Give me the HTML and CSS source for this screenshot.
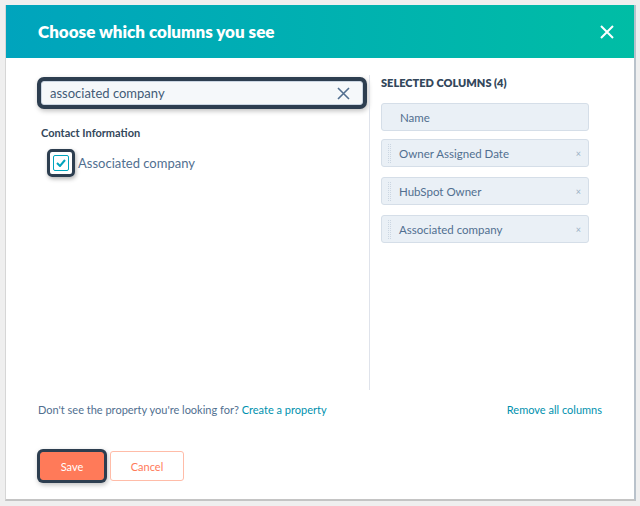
FILE: index.html
```html
<!DOCTYPE html>
<html lang="en">
<head>
  <meta charset="UTF-8">
  <title>Choose which columns you see</title>
  <link rel="stylesheet" href="styles.css">
</head>
<body>
  <div class="modal">
    <div class="modal-header">
      <h1>Choose which columns you see</h1>
      <button class="close" aria-label="Close">
        <svg width="14" height="14" viewBox="0 0 14 14"><path d="M1 1L13 13M13 1L1 13" stroke="#fff" stroke-width="2" fill="none"/></svg>
      </button>
    </div>

    <div class="modal-body">
      <div class="left-panel">
        <div class="search focus-ring">
          <span class="search-text">associated company</span>
          <svg class="clear" width="13" height="13" viewBox="0 0 13 13"><path d="M1 1L12 12M12 1L1 12" stroke="#516f90" stroke-width="1.6" fill="none"/></svg>
        </div>
        <h3 class="group-title">Contact Information</h3>
        <label class="option">
          <span class="check-ring">
            <span class="checkbox">
              <svg width="10" height="8" viewBox="0 0 10 8"><path d="M1 4L4 7L9 1" stroke="#00a4bd" stroke-width="2" fill="none"/></svg>
            </span>
          </span>
          <span class="option-label">Associated company</span>
        </label>
      </div>

      <div class="right-panel">
        <h3 class="selected-title">Selected columns (4)</h3>
        <ul class="selected-list">
          <li class="fixed"><span class="col-name">Name</span></li>
          <li><span class="handle"></span><span class="col-name">Owner Assigned Date</span><span class="remove">×</span></li>
          <li><span class="handle"></span><span class="col-name">HubSpot Owner</span><span class="remove">×</span></li>
          <li><span class="handle"></span><span class="col-name">Associated company</span><span class="remove">×</span></li>
        </ul>
      </div>
    </div>

    <div class="hint-row">
      <p>Don't see the property you're looking for? <a href="#">Create a property</a></p>
      <a href="#">Remove all columns</a>
    </div>

    <div class="modal-footer">
      <button class="btn-save">Save</button>
      <button class="btn-cancel">Cancel</button>
    </div>
  </div>
</body>
</html>
```

FILE: styles.css
```css
html, body {
  margin: 0;
  padding: 0;
}

body {
  font-family: Lato, "Noto Sans", sans-serif;
  background-color: #efefef;
  width: 640px;
  height: 506px;
  overflow: hidden;
}

.modal {
  margin: 5px 0 0 5px;
  width: 628px;
  height: 494px;
  background-color: #fff;
  border-left: 1px solid #d6d6d6;
  border-right: 2px solid #b9c2cb;
  border-bottom: 2px solid #c4c4c4;
  display: flex;
  flex-direction: column;
}

.modal-header {
  height: 53px;
  background: linear-gradient(to right, #00a4bd, #00bda5);
  display: flex;
  align-items: center;
  justify-content: space-between;
  padding: 0 20px 0 32px;
}

.modal-header h1 {
  margin: 0;
  color: #fff;
  font-size: 17px;
  font-weight: 800;
}

.close {
  background: none;
  border: none;
  padding: 0;
  display: flex;
}

.modal-body {
  display: flex;
  height: 332px;
}

.left-panel {
  width: 328px;
  padding: 20px 0 0 35px;
}

.focus-ring {
  border-radius: 6px;
  box-shadow: 0 0 0 4px #2d3e50, 1px 2px 5px 4px rgba(0, 0, 0, 0.25);
}

.search {
  height: 22px;
  width: 300px;
  margin: 3px 0 0 0;
  padding: 0 12px 0 8px;
  background-color: #f5f8fa;
  border: 1px solid #cbd6e2;
  border-radius: 3px;
  display: flex;
  align-items: center;
  justify-content: space-between;
  font-size: 13px;
  color: #425b76;
}

.group-title {
  margin: 21px 0 0 0;
  font-size: 11px;
  font-weight: 700;
  color: #33475b;
}

.option {
  display: flex;
  align-items: center;
  margin-top: 10px;
  margin-left: 6px;
}

.check-ring {
  display: flex;
  padding: 3px;
  border: 3px solid #2d3e50;
  border-radius: 5px;
  box-shadow: 1px 2px 4px rgba(0, 0, 0, 0.3);
}

.checkbox {
  width: 14px;
  height: 14px;
  border: 1px solid #00a4bd;
  border-radius: 2px;
  background-color: #fff;
  display: flex;
  align-items: center;
  justify-content: center;
}

.option-label {
  margin-left: 3px;
  font-size: 13px;
  color: #516f90;
}

.right-panel {
  border-left: 1px solid #dfe3eb;
  margin-top: 17px;
  padding-left: 11px;
  flex: 1;
}

.selected-title {
  margin: 1px 0 14px 0;
  font-size: 11px;
  font-weight: 800;
  text-transform: uppercase;
  color: #33475b;
}

.selected-list {
  list-style-type: none;
  margin: 0;
  padding: 0;
  width: 208px;
}

.selected-list li {
  height: 26px;
  margin-bottom: 10px;
  background-color: #eaf0f6;
  border: 1px solid #d5dee8;
  border-radius: 3px;
  display: flex;
  align-items: center;
  font-size: 11.5px;
  color: #516f90;
}

.selected-list li.fixed {
  margin-bottom: 8px;
  padding-left: 18px;
}

.handle {
  width: 1px;
  height: 19px;
  margin: 0 8px 0 6px;
  border-left: 1px dotted #cbd6e2;
  border-right: 1px dotted #cbd6e2;
}

.col-name {
  flex: 1;
}

.remove {
  font-size: 9px;
  color: #99afc4;
  margin-right: 7px;
}

.hint-row {
  display: flex;
  justify-content: space-between;
  align-items: center;
  padding: 13px 32px 0 32px;
  font-size: 11px;
  color: #516f90;
}

.hint-row p {
  margin: 0;
}

.hint-row a {
  color: #0091ae;
  text-decoration: none;
}

.modal-footer {
  display: flex;
  gap: 6px;
  padding: 35px 0 0 34px;
}

.modal-footer button {
  font-family: Lato, "Noto Sans", sans-serif;
  font-size: 11px;
  border-radius: 3px;
  cursor: pointer;
}

.btn-save {
  width: 64px;
  height: 28px;
  background-color: #ff7a59;
  color: #fff;
  border: 1px solid #ff7a59;
  box-shadow: 0 0 0 3px #2d3e50, 1px 2px 5px 3px rgba(0, 0, 0, 0.25);
  border-radius: 4px;
  margin-top: 1px;
}

.btn-cancel {
  width: 74px;
  height: 30px;
  background-color: #fff;
  color: #ff7a59;
  border: 1px solid #ffbca8;
}
```
